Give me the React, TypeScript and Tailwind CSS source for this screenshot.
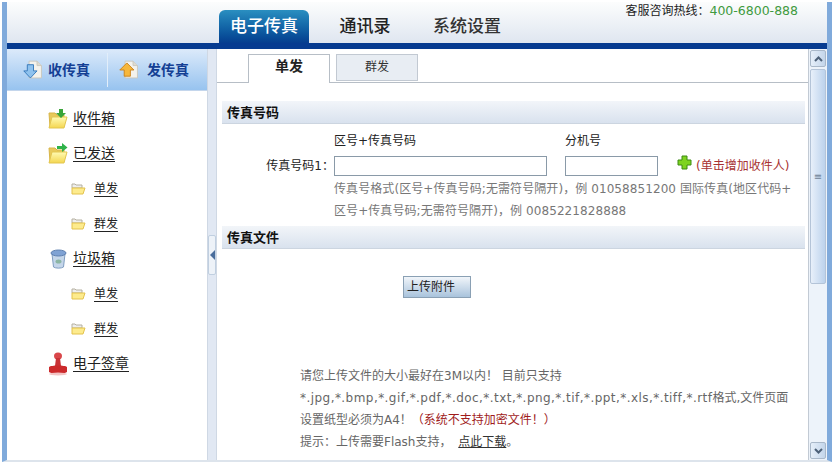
import * as React from "react";

const FONT = "font-['DejaVu_Sans','Noto_Sans_CJK_SC',sans-serif]";

function FileArrow({ up }: { up?: boolean }) {
  return (
    <svg width="23" height="22" viewBox="0 0 26 24">
      <path d="M8 2h9l5 5v14H8z" fill="#f4f2ec" stroke="#c9c6bc" />
      <path d="M17 2v5h5" fill="#dedad0" stroke="#c9c6bc" />
      {up ? (
        <path d="M10 4l8 8h-4v7H7v-7H2z" fill="#f6b73c" stroke="#c97f16" />
      ) : (
        <path d="M6 6h7v7h4l-7.5 8L2 13h4z" fill="#8fc2ee" stroke="#2f74b8" />
      )}
    </svg>
  );
}

function BigFolder({ down }: { down?: boolean }) {
  return (
    <svg width="20" height="21" viewBox="0 0 20 21">
      <defs>
        <linearGradient id="folderFill" x1="0" y1="0" x2="0" y2="1">
          <stop offset="0" stopColor="#fffbb4" />
          <stop offset="1" stopColor="#f4d650" />
        </linearGradient>
      </defs>
      <path d="M1 5h6l2 2h7v12H2z" fill="#e8c95a" stroke="#d8b548" />
      <path d="M1 20L4 9h15l-3 11z" fill="url(#folderFill)" stroke="#e3c650" />
      {down ? (
        <path d="M11 1h4v4h3l-5 5-5-5h3z" fill="#3aa53a" />
      ) : (
        <path d="M9 3h5V0l5.500 4.500L14 9V6H9z" fill="#2fb34a" />
      )}
    </svg>
  );
}

function SmallFolder() {
  return (
    <svg width="15" height="13" viewBox="0 0 15 13">
      <path d="M1 2h3l1 1h6v3H1z" fill="#eeeeee" stroke="#b5b0a0" />
      <path d="M1 12V6h13l-2 6z" fill="#fdeb8d" stroke="#e3c24d" />
    </svg>
  );
}

function TrashIcon() {
  return (
    <svg className="ml-[2px]" width="17" height="20" viewBox="0 0 17 20">
      <path d="M2 5l1.500 13c2 1.500 8 1.500 10 0L15 5z" fill="#c5d6ea" stroke="#7f9cc0" />
      <ellipse cx="8.500" cy="4" rx="7.500" ry="3" fill="#7fa2d4" stroke="#5d7fb0" />
      <ellipse cx="8.500" cy="12.500" rx="3" ry="2" fill="#8cb6a4" />
    </svg>
  );
}

function StampIcon() {
  return (
    <svg width="20" height="24" viewBox="0 0 20 24">
      <ellipse cx="10" cy="4" rx="4" ry="3.500" fill="#d9474a" />
      <path d="M8 6h4l1 8H7z" fill="#c83236" />
      <path d="M1 15c2-2 16-2 18 0v5c-3 2-15 2-18 0z" fill="#cc2a2c" />
      <ellipse cx="10" cy="22" rx="9" ry="1.500" fill="#f3c4c4" />
    </svg>
  );
}

function PlusIcon() {
  return (
    <svg width="15" height="15" viewBox="0 0 15 15">
      <path d="M5 1h5v4h4v5h-4v4H5v-4H1V5h4z" fill="#7ed321" stroke="#3c8a12" />
    </svg>
  );
}

function ScrollArrow({ down }: { down?: boolean }) {
  return (
    <div className="flex h-[17px] w-[16px] items-center justify-center rounded-[2px] border border-[#a9b8c9] bg-gradient-to-r from-[#e6eff9] to-[#c3d5ea]">
      <svg width="9" height="6" viewBox="0 0 9 6">
        <path d={down ? "M1 1l3.500 3.500L8 1" : "M1 5l3.500-3.500L8 5"} fill="none" stroke="#4d6178" strokeWidth="2" />
      </svg>
    </div>
  );
}

function SectionHeader({ title }: { title: string }) {
  return (
    <div className="ml-[5px] flex h-[23px] w-[583px] items-center border-b border-[#ccd5e0] bg-gradient-to-b from-[#f2f5f9] to-[#d9e2ee] pt-[1px] pl-[5px] text-[13px] leading-[20px] font-bold text-[#111]">
      {title}
    </div>
  );
}

function NavRow({ icon, label, sub }: { icon: React.ReactNode; label: string; sub?: boolean }) {
  return (
    <div className={`flex h-[35px] items-center ${sub ? "pl-[64px] text-[12px]" : "pl-[41px] text-[14px]"} text-[#222]`}>
      <span className={`flex shrink-0 items-center justify-start ${sub ? "w-[23px]" : "w-[25px]"}`}>{icon}</span>
      <span className="underline underline-offset-3">{label}</span>
    </div>
  );
}

export default function App() {
  return (
    <div className={`${FONT} flex h-[466px] w-[835px] flex-col overflow-hidden bg-white pt-[2px] pb-[4px] pl-[2px] pr-[3px] text-[12px]`}>
      <div className="flex min-h-0 flex-1 flex-col border-x-[5px] border-x-[#80aadb] border-b-[2px] border-b-[#dde4ec]">
        {/* Top bar */}
        <div className="flex h-[41px] shrink-0 items-end justify-between bg-gradient-to-b from-[#fcfdfd] to-[#dfe6f0] pl-[212px]">
          <div className="flex items-end">
            <div className="flex h-[33px] w-[90px] items-center justify-center rounded-t-[6px] bg-gradient-to-b from-[#2a8fc0] to-[#063d8f] text-[17px] font-medium text-white">
              电子传真
            </div>
            <div className="flex h-[33px] w-[112px] items-center justify-center text-[17px] font-medium text-[#222]">通讯录</div>
            <div className="flex h-[33px] w-[92px] items-center justify-center text-[17px] font-medium text-[#333]">系统设置</div>
          </div>
          <div className="mb-auto pr-[29px] text-[12px] leading-[17px] text-[#222]">
            客服咨询热线：<span className="text-[12.500px] text-[#3f9a3f]">400-6800-888</span>
          </div>
        </div>
        <div className="h-[6px] shrink-0 bg-[#063b90]" />

        <div className="flex min-h-0 flex-1">
          {/* Sidebar */}
          <div className="flex w-[200px] shrink-0 flex-col">
            <div className="flex h-[42px] shrink-0 items-center border-b border-[#c4d6ec] bg-gradient-to-b from-[#dceafa] to-[#97c3ef] text-[14px] font-bold text-[#143f94]">
              <div className="flex h-[34px] w-[101px] items-center gap-[3px] border-r border-[#e2eefa] pl-[15px]">
                <FileArrow />
                <span className="pt-[2px]">收传真</span>
              </div>
              <div className="flex items-center gap-[6px] pl-[10px]">
                <FileArrow up />
                <span className="pt-[2px]">发传真</span>
              </div>
            </div>
            <div className="pt-[10px]">
              <NavRow icon={<BigFolder down />} label="收件箱" />
              <NavRow icon={<BigFolder />} label="已发送" />
              <NavRow sub icon={<SmallFolder />} label="单发" />
              <NavRow sub icon={<SmallFolder />} label="群发" />
              <NavRow icon={<TrashIcon />} label="垃圾箱" />
              <NavRow sub icon={<SmallFolder />} label="单发" />
              <NavRow sub icon={<SmallFolder />} label="群发" />
              <NavRow icon={<StampIcon />} label="电子签章" />
            </div>
          </div>

          {/* Collapse strip */}
          <div className="flex w-[10px] shrink-0 items-center justify-center border-x border-[#cfd8e4] bg-[#e1e8f3]">
            <div className="flex h-[40px] w-[8px] items-center justify-center rounded-[2px] border border-[#c0cfe0] bg-[#edf2f8]">
              <div className="h-0 w-0 border-y-[5px] border-r-[5px] border-y-transparent border-r-[#4a6d9c]" />
            </div>
          </div>

          {/* Main */}
          <div className="min-w-0 flex-1">
            <div className="flex h-[34px] items-end border-b border-[#b7bec6] pl-[31px]">
              <div className="-mb-px flex h-[29px] w-[82px] items-center justify-center border-x border-t border-[#b7bec6] bg-white pb-[5px] text-[14px] font-bold text-[#222]">
                单发
              </div>
              <div className="mb-[1px] ml-[6px] flex h-[27px] w-[82px] items-center justify-center border border-[#c2c9d2] bg-[#e8edf3] pb-[2px] text-[12px] text-[#333]">
                群发
              </div>
            </div>

            <div className="pt-[18px]">
              <SectionHeader title="传真号码" />
              <div className="flex pt-[9px] pl-[117px] leading-[17px] text-[#222]">
                <span className="w-[231px]">区号+传真号码</span>
                <span>分机号</span>
              </div>
              <div className="flex items-center pt-[5px] text-[#222]">
                <span className="w-[117px] text-right whitespace-nowrap">传真号码1：</span>
                <div className="h-[20px] w-[213px] border border-[#8a9aa8] bg-white" />
                <div className="ml-[18px] h-[20px] w-[93px] border border-[#8a9aa8] bg-white" />
                <span className="mb-[7px] ml-[19px]"><PlusIcon /></span>
                <span className="ml-[4px] text-[#a83232]">(单击增加收件人)</span>
              </div>
              <div className="ml-[117px] pt-[1px] leading-[22px] tracking-[0.08px] whitespace-nowrap text-[#777]">
                <div>传真号格式(区号+传真号码;无需符号隔开)，例 01058851200 国际传真(地区代码+</div>
                <div>区号+传真号码;无需符号隔开)，例 0085221828888</div>
              </div>
              <div className="pt-[4px]">
                <SectionHeader title="传真文件" />
              </div>
              <div className="flex pt-[27px] pl-[186px]">
                <div className="flex h-[22px] w-[68px] items-center border border-[#8aa0b4] bg-gradient-to-b from-[#f1f5fa] to-[#a9c3dc] pl-[3px] text-[#222]">
                  上传附件
                </div>
              </div>
              <div className="pt-[67px] pl-[83px] leading-[22px] whitespace-nowrap text-[#666]">
                <div>请您上传文件的大小最好在3M以内！ 目前只支持</div>
                <div>
                  <span className="tracking-[0.45px]">*.jpg,*.bmp,*.gif,*.pdf,*.doc,*.txt,*.png,*.tif,*.ppt,*.xls,*.tiff,*.rtf</span>格式,文件页面
                </div>
                <div>
                  设置纸型必须为A4！<span className="text-[#a01c1c]">（系统不支持加密文件！）</span>
                </div>
                <div>
                  提示：上传需要Flash支持， <span className="ml-[3px] text-[#333] underline">点此下载</span>。
                </div>
              </div>
            </div>
          </div>

          {/* Scrollbar */}
          <div className="flex w-[19px] shrink-0 flex-col items-center justify-between border-l border-[#c2cad4] bg-[#edf3fa] py-[1px]">
            <div className="flex flex-col items-center gap-[2px]">
              <ScrollArrow />
              <div className="flex h-[215px] w-[16px] items-center justify-center rounded-[2px] border border-[#b4c4d8] bg-gradient-to-r from-[#e8f0fa] to-[#bcd2ec] text-[10px] leading-none text-[#6f8296]">
                ≡
              </div>
            </div>
            <ScrollArrow down />
          </div>
        </div>
      </div>
    </div>
  );
}
